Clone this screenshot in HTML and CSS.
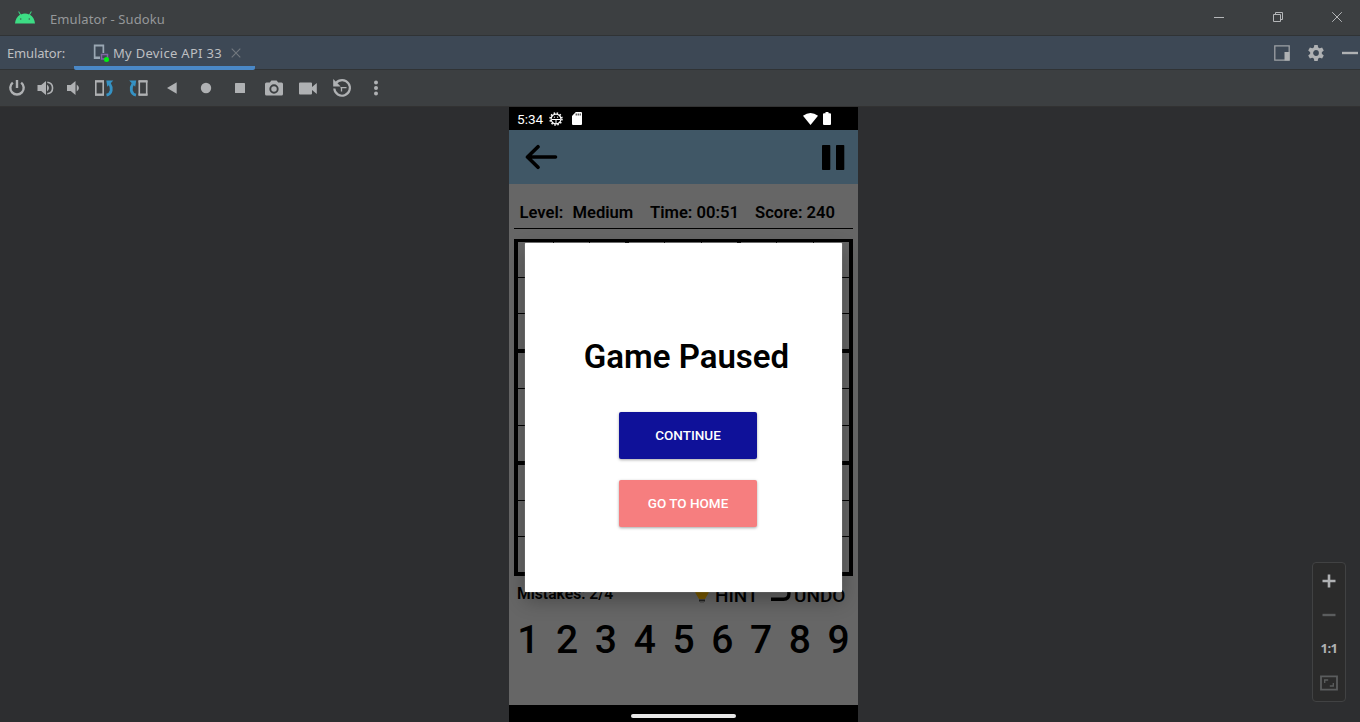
FILE: index.html
```html
<!DOCTYPE html>
<html lang="en">
<head>
<meta charset="utf-8">
<title>Emulator - Sudoku</title>
<link rel="stylesheet" href="styles.css">
</head>
<body>
<header class="titlebar">
  <svg class="android" width="20" height="14" viewBox="0 0 20 14"><path d="M0 12.600C.3 8.500 2.200 5.500 5 3.800L3.200.8l.8-.5 1.900 3.100Q10 1.700 14.100 3.400L16 .3l.8.5L15 3.800c2.800 1.700 4.700 4.700 5 8.800z" fill="#3ddc84"/><circle cx="5.700" cy="8" r=".8" fill="#3c6050"/><circle cx="14.300" cy="8" r=".8" fill="#3c6050"/></svg>
  <span class="window-title">Emulator - Sudoku</span>
  <div class="window-controls">
    <svg width="12" height="12" viewBox="0 0 12 12"><path d="M1 6.500h10"/></svg>
    <svg width="12" height="12" viewBox="0 0 12 12"><path d="M1.500 3.500h7v7h-7zM3.500 3.500v-2h7v7h-2"/></svg>
    <svg width="12" height="12" viewBox="0 0 12 12"><path d="M1.200 1.200l9.600 9.600M10.800 1.200l-9.600 9.600"/></svg>
  </div>
</header>

<nav class="tabbar">
  <span class="tab-label">Emulator:</span>
  <div class="tab">
    <svg width="18" height="20" viewBox="0 0 18 20"><path d="M1.800 1.500h10.400v8.500H10.500V3.500H3.500v10H8v2.500H1.800z" fill="#9aa7b3"/><path d="M9.500 11.500h6v4.500h-6z" fill="none" stroke="#8067a3" stroke-width="1.500"/><circle cx="14.500" cy="16.500" r="2.500" fill="#00f014"/></svg>
    <span class="tab-name">My Device API 33</span>
    <svg class="tab-close" width="10" height="10" viewBox="0 0 10 10"><path d="M.7.7l8.600 8.600M9.300.7L.7 9.300"/></svg>
  </div>
  <div class="tab-tools">
    <svg width="16" height="16" viewBox="0 0 16 16"><path d="M.8.8h14.400v14.400H.8z" fill="none" stroke="#9da1a5" stroke-width="1.300"/><path d="M10.500 7h5v8.500h-5z" fill="#afb1b3"/></svg>
    <svg width="16" height="16" viewBox="0 0 16 16"><g fill="#afb1b3"><path d="M6.300 0h3.400l.5 3H5.800zM6.300 16h3.400l.5-3H5.800z"/><path d="M6.300 0h3.400l.5 3H5.800zM6.300 16h3.400l.5-3H5.800z" transform="rotate(60 8 8)"/><path d="M6.300 0h3.400l.5 3H5.800zM6.300 16h3.400l.5-3H5.800z" transform="rotate(120 8 8)"/></g><circle cx="8" cy="8" r="4.400" fill="none" stroke="#afb1b3" stroke-width="3"/></svg>
    <svg width="16" height="16" viewBox="0 0 16 16"><path d="M0 8h16" stroke="#afb1b3" stroke-width="2.400"/></svg>
  </div>
</nav>

<div class="toolbar">
  <svg class="narrow" viewBox="0 0 20 20"><path d="M10 2v8M5.800 4.600a6.700 6.700 0 1 0 8.400 0" fill="none" stroke="#afb1b3" stroke-width="2.400"/></svg>
  <svg class="narrow" viewBox="0 0 20 20"><path d="M2.500 7h3.700L11 3v14l-4.800-4H2.500z" fill="#afb1b3"/><path d="M12 6.500q4 3.500 0 7z" fill="#afb1b3"/><path d="M12.300 4.200c7 1 7 10.600 0 11.600" fill="none" stroke="#afb1b3" stroke-width="1.600"/></svg>
  <svg class="narrow" viewBox="0 0 20 20"><path d="M4 7h3.700L12.500 3v14l-4.800-4H4zM13.700 6.500q4.500 3.500 0 7z" fill="#afb1b3"/></svg>
  <svg viewBox="0 0 20 20"><path d="M1.800 3h7.400v14H1.800z" fill="none" stroke="#afb1b3" stroke-width="1.600"/><path d="M1 3.500h9M1 16.500h9" stroke="#afb1b3" stroke-width="2"/><path d="M12.500 17.200C18 16 18.500 10 15.500 5.500" fill="none" stroke="#3592c4" stroke-width="2.800"/><path d="M12.300 2.500h7l-6 6.300z" fill="#3592c4"/></svg>
  <svg viewBox="0 0 20 20"><g transform="matrix(-1 0 0 1 20.500 0)"><path d="M1.800 3h7.400v14H1.800z" fill="none" stroke="#afb1b3" stroke-width="1.600"/><path d="M1 3.500h9M1 16.500h9" stroke="#afb1b3" stroke-width="2"/><path d="M12.500 17.200C18 16 18.500 10 15.500 5.500" fill="none" stroke="#3592c4" stroke-width="2.800"/><path d="M12.300 2.500h7l-6 6.300z" fill="#3592c4"/></g></svg>
  <svg viewBox="0 0 20 20"><path d="M5 10l9.700-5.800v11.600z" fill="#afb1b3"/></svg>
  <svg viewBox="0 0 20 20"><circle cx="10" cy="10" r="5.200" fill="#afb1b3"/></svg>
  <svg viewBox="0 0 20 20"><rect x="5" y="5" width="10" height="10" rx=".6" fill="#afb1b3"/></svg>
  <svg viewBox="0 0 20 20"><path d="M2.500 4.500h3.300l1.600-2h5.200l1.600 2h3.300q1.500 0 1.500 1.500v10q0 1.500-1.500 1.500h-15Q1 17.500 1 16V6q0-1.500 1.500-1.500z" fill="#afb1b3"/><circle cx="10" cy="11" r="3.700" fill="none" stroke="#3c3f41" stroke-width="1.900"/></svg>
  <svg viewBox="0 0 20 20"><path d="M2 4.500h11q1 0 1 1V9l4.800-4v11L14 12v3.500q0 1-1 1H2q-1 0-1-1v-10q0-1 1-1z" fill="#afb1b3"/></svg>
  <svg viewBox="0 0 20 20"><path d="M4 5A7.800 7.800 0 1 1 2.300 10.500" fill="none" stroke="#afb1b3" stroke-width="2.200"/><path d="M1.200 1v7.500h7.500z" fill="#afb1b3"/><path d="M8.500 9.700h6M9.500 9.200v4.300" stroke="#afb1b3" stroke-width="1.300"/></svg>
  <svg viewBox="0 0 20 20"><g fill="#afb1b3"><circle cx="10" cy="4.500" r="2"/><circle cx="10" cy="10" r="2"/><circle cx="10" cy="15.500" r="2"/></g></svg>
</div>

<main class="stage">
  <section class="phone">
    <div class="status">
      <span class="clock">5:34</span>
      <svg class="bug" width="14" height="14" viewBox="0 0 14 14"><circle cx="7" cy="7" r="6" fill="none" stroke="#fff" stroke-width="1.500" stroke-dasharray="1.500 1.640"/><circle cx="7" cy="7" r="4.900" fill="none" stroke="#fff" stroke-width="1.200"/><path d="M3 7.500h8M7 7.500V12" stroke="#fff" stroke-width="1"/><circle cx="5.400" cy="5.200" r=".6" fill="#fff"/><circle cx="8.600" cy="5.200" r=".6" fill="#fff"/></svg>
      <svg class="sd" width="10" height="13" viewBox="0 0 10 13"><path d="M3.800 0H9q1 0 1 1v11q0 1-1 1H1q-1 0-1-1V4z" fill="#fff"/><path d="M4.200 1.500v2M6.200 1.500v2M8.200 1.500v2" stroke="#000" stroke-width=".9"/></svg>
      <svg class="wifi" width="15" height="12" viewBox="0 0 15 12"><path d="M0 2.800Q7.500-2.800 15 2.800L7.500 12z" fill="#fff"/></svg>
      <svg class="battery" width="8" height="13" viewBox="0 0 8 13"><path d="M2.500 0h3v1.300H7q1 0 1 1V12q0 1-1 1H1q-1 0-1-1V2.300q0-1 1-1h1.500z" fill="#fff"/></svg>
    </div>
    <div class="appbar">
      <svg width="33" height="26" viewBox="0 0 33 26"><path d="M30.500 13H3.500M13 2.700L2.500 13l10.500 10.300" fill="none" stroke="#000" stroke-width="3.600" stroke-linecap="round" stroke-linejoin="round"/></svg>
      <svg width="23" height="26" viewBox="0 0 23 26"><rect width="8.300" height="25" rx=".8"/><rect x="14" width="8.300" height="25" rx=".8"/></svg>
    </div>
    <div class="stats"><span class="level">Level:</span><span class="difficulty">Medium</span><span class="time">Time: 00:51</span><span class="score">Score: 240</span></div>
    <svg class="board" width="339" height="337" viewBox="0 0 339 337">
      <path d="M0 0h339v337H0zM4 3v330h331V3z" fill="#000" fill-rule="evenodd"/>
      <path d="M39.500 2v333M75.500 2v333M150.500 2v333M187.500 2v333M262.500 2v333M299.500 2v333M2 38.500h335M2 74.500h335M2 149.500h335M2 186.500h335M2 261.500h335M2 297.500h335" stroke="#000"/>
      <path d="M113 2v333M225 2v333M2 112h335M2 224h335" stroke="#000" stroke-width="4"/>
    </svg>
    <div class="actions">
      <span class="mistakes">Mistakes: 2/4</span>
      <svg class="bulb" width="14" height="22" viewBox="0 0 14 22"><path d="M7 0C-1 0-1 8 1 12l3 5h6l3-5c2-4 2-12-6-12z" fill="#7b5b00"/><path d="M4 17.500h6v2H4z" fill="#222"/><path d="M5 19.500h4v1.500H5z" fill="#555"/></svg>
      <span class="hint">HINT</span>
      <svg class="undo" width="20" height="20" viewBox="0 0 20 20"><path d="M0 17.300h12.500q5.500 0 5.500-6T12.500 5H3" fill="none" stroke="#000" stroke-width="3.400"/></svg>
      <span class="undo-label">UNDO</span>
    </div>
    <div class="digits"><span>1</span><span>2</span><span>3</span><span>4</span><span>5</span><span>6</span><span>7</span><span>8</span><span>9</span></div>
    <div class="home-bar"><div class="pill"></div></div>
    <div class="dialog">
      <h1>Game Paused</h1>
      <button class="continue">CONTINUE</button>
      <button class="home">GO TO HOME</button>
    </div>
  </section>
  <aside class="zoom-panel">
    <svg width="20" height="20" viewBox="0 0 20 20"><path d="M10 3.500v13M3.500 10h13" stroke="#afb1b3" stroke-width="2.600"/></svg>
    <svg width="20" height="20" viewBox="0 0 20 20"><path d="M3.500 10h13" stroke="#5b5d5e" stroke-width="2.400"/></svg>
    <span class="ratio">1:1</span>
    <svg width="20" height="20" viewBox="0 0 20 20"><path d="M2 3.300h16v13.400H2z" fill="none" stroke="#5b5d5e" stroke-width="1.800"/><path d="M5.700 10V7h3.500M14.300 10v3h-3.500" fill="none" stroke="#5b5d5e" stroke-width="1.300"/></svg>
  </aside>
</main>
</body>
</html>
```
FILE: styles.css
```css
* { box-sizing: border-box; }
body {
  margin: 0;
  width: 1360px;
  height: 722px;
  overflow: hidden;
  background: #2d2e30;
  font-family: "Noto Sans", "Open Sans", sans-serif;
}
svg { display: block; flex: none; }
span { white-space: nowrap; }

.titlebar {
  display: flex;
  align-items: center;
  height: 36px;
  padding-left: 15px;
  background: #3c3f41;
  border-bottom: 1px solid #303335;
}
.android { margin-top: 1px; }
.window-title { margin: 2px 0 0 15px; font-size: 13px; letter-spacing: .12px; color: #96989a; }
.window-controls { display: flex; gap: 47px; margin: -1px 17px 0 auto; }
.window-controls svg { fill: none; stroke: #b4b6b8; stroke-width: 1; }

.tabbar {
  display: flex;
  align-items: center;
  height: 34px;
  padding-left: 7px;
  background: #3d4855;
  border-bottom: 1px solid #303335;
  color: #bdbfc1;
  font-size: 13px;
}
.tab-label { width: 67px; letter-spacing: -.15px; }
.tab {
  display: flex;
  align-items: center;
  width: 181px;
  height: 34px;
  padding-left: 18px;
  background: linear-gradient(#4a88c7, #4a88c7) bottom / 100% 4px no-repeat;
  border-radius: 0 0 2px 2px;
}
.tab-name { margin-left: 3px; width: 118px; letter-spacing: .3px; }
.tab-close { fill: none; stroke: #73797f; stroke-width: 1.1; }
.tab-tools { display: flex; gap: 18px; margin: 0 2px 0 auto; }

.toolbar {
  display: flex;
  align-items: center;
  height: 37px;
  padding-left: 3px;
  background: #3c3f41;
  border-bottom: 1px solid #323232;
}
.toolbar svg { width: 34px; height: 20px; }
.toolbar .narrow { width: 28px; }

.stage { position: relative; display: flex; height: 615px; padding-left: 509px; }
.phone {
  position: relative;
  width: 349px;
  height: 615px;
  overflow: hidden;
  background: #666;
  font-family: Roboto, sans-serif;
  color: #000;
}
.status { display: flex; align-items: center; height: 23px; padding: 0 27px 0 8px; background: #000; color: #fff; }
.clock { width: 32px; margin-top: 1px; font-size: 13.600px; }
.sd { margin-left: 9px; }
.wifi { margin-left: auto; }
.battery { margin-left: 5px; }
.appbar { display: flex; justify-content: space-between; height: 54px; padding: 14px 13px 0 16px; background: #405766; }
.appbar svg:last-child { margin-top: 1px; }
.stats {
  display: flex;
  align-items: center;
  height: 45px;
  margin: 0 5px 10px;
  padding: 14px 0 0 5.5px;
  border-bottom: 1px solid #000;
  font-size: 16.600px;
  font-weight: 600;
  line-height: 20px;
}
.level { width: 53px; }
.difficulty { width: 77.500px; }
.time { width: 105px; }
.board { margin-left: 5px; }
.actions { display: flex; height: 37px; padding-left: 8px; font-weight: 500; }
.mistakes { width: 178px; padding-top: 9px; font-size: 15.700px; font-weight: 600; line-height: 18px; }
.bulb { margin-top: 6px; }
.hint { width: 56px; margin-left: 6px; padding-top: 9px; font-size: 19px; line-height: 22px; }
.undo { margin-top: 6px; }
.undo-label { margin-left: 3px; padding-top: 9px; font-size: 19px; line-height: 22px; }
.digits {
  display: grid;
  grid-template-columns: repeat(9, 1fr);
  height: 92px;
  padding-top: 4px;
  text-align: center;
  font-size: 39px;
  font-weight: 500;
  line-height: 46px;
}
.home-bar { height: 17px; padding-top: 9px; background: #000; }
.pill { width: 105px; height: 4px; margin-left: 122px; border-radius: 2px; background: #e8e8e8; }

.dialog {
  position: absolute;
  left: 16px;
  top: 136px;
  display: flex;
  flex-direction: column;
  align-items: center;
  width: 317px;
  height: 349px;
  border-radius: 1px;
  background: #fff;
  box-shadow: 0 0 1px rgba(255, 255, 255, .8), 0 8px 20px rgba(0, 0, 0, .3);
}
.dialog h1 { margin: 94px 0 35px 6px; font-size: 33px; line-height: 40px; font-weight: 600; white-space: nowrap; }
.dialog button {
  width: 138px;
  height: 47px;
  margin: 0 0 21px 9px;
  padding: 0 0 1px;
  border: 0;
  border-radius: 2px;
  font: 500 13.500px Roboto, sans-serif;
  color: #fff;
  box-shadow: 0 1px 3px rgba(0, 0, 0, .35);
}
.dialog .continue { background: #0f1199; }
.dialog .home { background: #f67e7f; }

.zoom-panel {
  display: flex;
  flex-direction: column;
  align-items: center;
  gap: 14px;
  width: 34px;
  height: 140px;
  margin: 455px 14px 0 auto;
  padding-top: 8px;
  border: 1px solid #414243;
  border-radius: 4px;
  background: #2b2b2b;
}
.ratio { height: 20px; margin-top: -1px; margin-bottom: 1px; font: 700 13px/20px "Open Sans", sans-serif; letter-spacing: -.5px; color: #afb1b3; }
```
